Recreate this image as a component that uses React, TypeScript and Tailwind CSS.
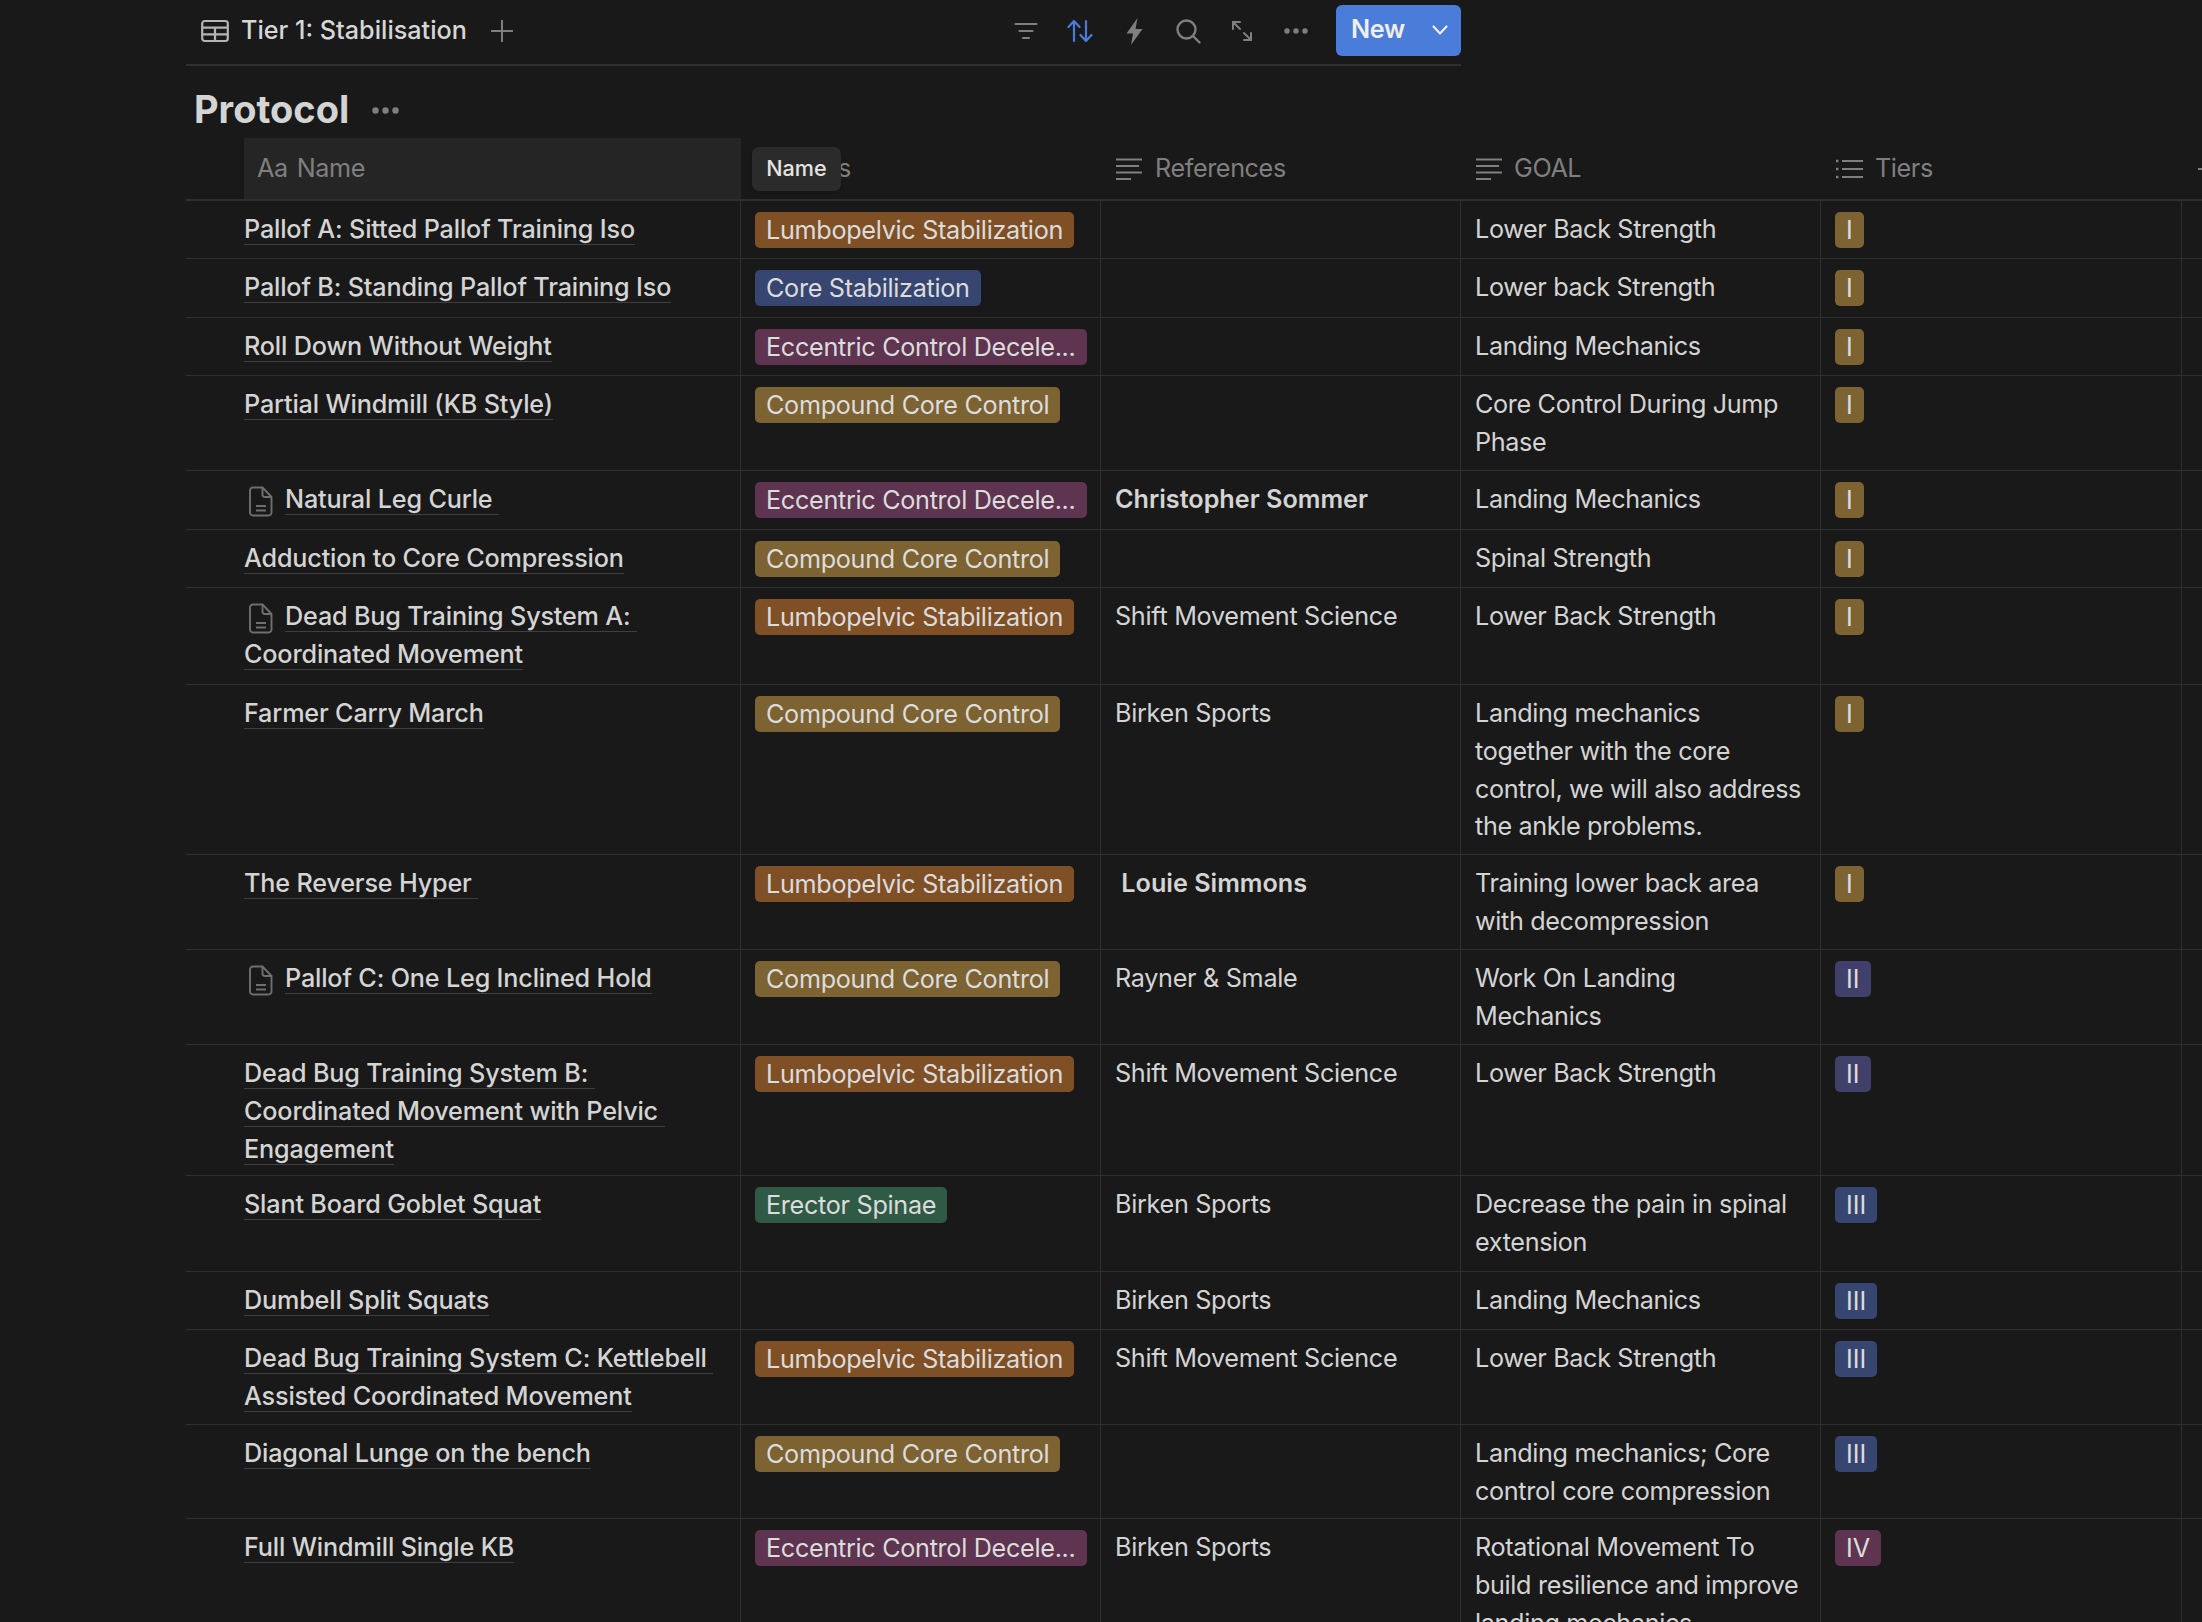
import React from "react";

type Row = {
  name: string;
  page?: boolean;
  tag?: string;
  source?: string;
  bold?: boolean;
  goal: string;
  tier: string;
  height: string;
};

const tagColors: Record<string, string> = {
  "Lumbopelvic Stabilization": "bg-[#7f5026]",
  "Core Stabilization": "bg-[#364670]",
  "Eccentric Control Decele...": "bg-[#5e3450]",
  "Compound Core Control": "bg-[#7d6232]",
  "Erector Spinae": "bg-[#2f5b46]",
};

const tierColors: Record<string, string> = {
  I: "bg-[#7d6232]",
  II: "bg-[#40406b]",
  III: "bg-[#364670]",
  IV: "bg-[#5e3450]",
};

const rows: Row[] = [
  { name: "Pallof A: Sitted Pallof Training Iso", tag: "Lumbopelvic Stabilization", goal: "Lower Back Strength", tier: "I", height: "h-[58px]" },
  { name: "Pallof B: Standing Pallof Training Iso", tag: "Core Stabilization", goal: "Lower back Strength", tier: "I", height: "h-[59px]" },
  { name: "Roll Down Without Weight", tag: "Eccentric Control Decele...", goal: "Landing Mechanics", tier: "I", height: "h-[58px]" },
  { name: "Partial Windmill (KB Style)", tag: "Compound Core Control", goal: "Core Control During Jump Phase", tier: "I", height: "h-[95px]" },
  { name: "Natural Leg Curle ", page: true, tag: "Eccentric Control Decele...", source: "Christopher Sommer", bold: true, goal: "Landing Mechanics", tier: "I", height: "h-[59px]" },
  { name: "Adduction to Core Compression", tag: "Compound Core Control", goal: "Spinal Strength", tier: "I", height: "h-[58px]" },
  { name: "Dead Bug Training System A: Coordinated Movement", page: true, tag: "Lumbopelvic Stabilization", source: "Shift Movement Science", goal: "Lower Back Strength", tier: "I", height: "h-[97px]" },
  { name: "Farmer Carry March", tag: "Compound Core Control", source: "Birken Sports", goal: "Landing mechanics together with the core control, we will also address the ankle problems.", tier: "I", height: "h-[170px]" },
  { name: "The Reverse Hyper ", tag: "Lumbopelvic Stabilization", source: " Louie Simmons", bold: true, goal: "Training lower back area with decompression", tier: "I", height: "h-[95px]" },
  { name: "Pallof C: One Leg Inclined Hold", page: true, tag: "Compound Core Control", source: "Rayner & Smale", goal: "Work On Landing Mechanics", tier: "II", height: "h-[95px]" },
  { name: "Dead Bug Training System B: Coordinated Movement with Pelvic Engagement", tag: "Lumbopelvic Stabilization", source: "Shift Movement Science", goal: "Lower Back Strength", tier: "II", height: "h-[131px]" },
  { name: "Slant Board Goblet Squat", tag: "Erector Spinae", source: "Birken Sports", goal: "Decrease the pain in spinal extension", tier: "III", height: "h-[96px]" },
  { name: "Dumbell Split Squats", source: "Birken Sports", goal: "Landing Mechanics", tier: "III", height: "h-[58px]" },
  { name: "Dead Bug Training System C: Kettlebell Assisted Coordinated Movement", tag: "Lumbopelvic Stabilization", source: "Shift Movement Science", goal: "Lower Back Strength", tier: "III", height: "h-[95px]" },
  { name: "Diagonal Lunge on the bench", tag: "Compound Core Control", goal: "Landing mechanics; Core control core compression", tier: "III", height: "h-[94px]" },
  { name: "Full Windmill Single KB", tag: "Eccentric Control Decele...", source: "Birken Sports", goal: "Rotational Movement To build resilience and improve landing mechanics", tier: "IV", height: "h-[130px]" },
];

const TableIcon = () => (
  <svg width="28" height="24" viewBox="0 0 28 24" fill="none" stroke="#b5b5b5" strokeWidth="2.2">
    <rect x="1.2" y="2" width="25.6" height="20" rx="2.5" />
    <path d="M1.2 8.6h25.6M1.2 15.3h25.6M14 8.6V22" />
  </svg>
);

const LinesIcon = () => (
  <svg width="26" height="24" viewBox="0 0 26 24" fill="none" stroke="#7f7f7f" strokeWidth="2">
    <path d="M0 2.5h26M0 9h23M0 15.5h26M0 22h15" />
  </svg>
);

const ListIcon = () => (
  <svg width="27" height="22" viewBox="0 0 27 22" fill="none" stroke="#7f7f7f" strokeWidth="2">
    <path d="M6 3h21M6 11h21M6 19h21" />
    <path d="M0 3h2.4M0 11h2.4M0 19h2.4" strokeWidth="2.4" />
  </svg>
);

const PageIcon = () => (
  <svg className="ml-[5px] mr-[12px] inline-block align-[-9px]" width="24" height="31" viewBox="0 0 24 31" fill="none" stroke="#6f6f6f" strokeWidth="1.9">
    <path d="M4 1.5h9.5l9 9.5v15.5a3 3 0 0 1-3 3H4a3 3 0 0 1-3-3v-22a3 3 0 0 1 3-3z" />
    <path d="M13.5 1.5v7a2.5 2.5 0 0 0 2.5 2.5h6.5M7 20h10M7 24.5h10" />
  </svg>
);

const Tag = ({ label }: { label: string }) => (
  <span className={`inline-block h-[36px] rounded-[5px] px-[11px] text-[25.2px] leading-[36px] tracking-[-0.3px] text-[#dcdcdc] ${tagColors[label]}`}>
    {label}
  </span>
);

const Toolbar = () => (
  <div className="ml-auto flex items-center">
    <div className="flex h-[40px] w-[54px] items-center justify-center">
      <svg width="24" height="20" viewBox="0 0 24 20" fill="none" stroke="#7f7f7f" strokeWidth="2.2" strokeLinecap="round">
        <path d="M1.5 3h21M5.5 10h13M9 17h6" />
      </svg>
    </div>
    <div className="flex h-[40px] w-[54px] items-center justify-center">
      <svg width="26" height="24" viewBox="0 0 26 24" fill="none" stroke="#4a7bd9" strokeWidth="2.2" strokeLinecap="round" strokeLinejoin="round">
        <path d="M7 22V2M1.5 8 7 2l5.5 6M19 2v20M13.5 16l5.5 6 5.5-6" />
      </svg>
    </div>
    <div className="flex h-[40px] w-[54px] items-center justify-center">
      <svg width="17" height="27" viewBox="0 0 17 27" fill="#7f7f7f">
        <path d="M11.5 0 0.5 15.5h6.5L5 27l11.5-16H9.5z" />
      </svg>
    </div>
    <div className="flex h-[40px] w-[54px] items-center justify-center">
      <svg width="25" height="25" viewBox="0 0 25 25" fill="none" stroke="#7f7f7f" strokeWidth="2.4" strokeLinecap="round">
        <circle cx="10.5" cy="10.5" r="9" />
        <path d="m17 17 6.5 6.5" />
      </svg>
    </div>
    <div className="flex h-[40px] w-[54px] items-center justify-center">
      <svg width="22" height="22" viewBox="0 0 22 22" fill="none" stroke="#7f7f7f" strokeWidth="2" strokeLinecap="round">
        <path d="M2 9V2h7M2 2l7 7M20 13v7h-7M20 20l-7-7" />
      </svg>
    </div>
    <div className="flex h-[40px] w-[54px] items-center justify-center">
      <svg width="24" height="6" viewBox="0 0 24 6" fill="#7f7f7f">
        <circle cx="3" cy="3" r="2.7" />
        <circle cx="12" cy="3" r="2.7" />
        <circle cx="21" cy="3" r="2.7" />
      </svg>
    </div>
    <button className="mb-[2px] ml-[13px] flex h-[51px] w-[125px] items-center rounded-[6px] bg-[#4a7cda] pl-[15px] text-[25.2px] font-semibold tracking-[-0.3px] text-[#f0eeea]">
      New
      <svg className="ml-[27px]" width="16" height="10" viewBox="0 0 16 10" fill="none" stroke="#f0eeea" strokeWidth="2.2" strokeLinecap="round" strokeLinejoin="round">
        <path d="m1.5 1.5 6.5 7 6.5-7" />
      </svg>
    </button>
  </div>
);

export default function App() {
  return (
    <div className="h-[1622px] overflow-hidden bg-[#191919] pl-[186px] font-[Inter,sans-serif] text-[25.2px] leading-[37.8px] text-[#d4d4d4]">
      <div className="flex h-[66px] w-[1275px] items-center border-b-2 border-[#2f2f2f] pb-[2px] pl-[15px]">
        <TableIcon />
        <span className="ml-[12px] font-medium text-[#d6d6d6]">Tier 1: Stabilisation</span>
        <svg className="ml-[24px]" width="22" height="22" viewBox="0 0 22 22" fill="none" stroke="#7f7f7f" strokeWidth="2">
          <path d="M11 0v22M0 11h22" />
        </svg>
        <Toolbar />
      </div>

      <div className="flex h-[72px] items-center pl-[8px] pt-[16px]">
        <h1 className="text-[38px] font-bold text-[#d4d4d4]">Protocol</h1>
        <svg className="ml-[23px] mt-[1px]" width="27" height="7" viewBox="0 0 27 7" fill="#7f7f7f">
          <circle cx="3.5" cy="3.5" r="3.2" />
          <circle cx="13.5" cy="3.5" r="3.2" />
          <circle cx="23.5" cy="3.5" r="3.2" />
        </svg>
      </div>

      <div className="relative grid h-[63px] grid-cols-[555px_360px_360px_360px_1fr] border-b-2 border-[#2f2f2f] tracking-[-0.4px] text-[#7f7f7f]">
        <div className="pl-[58px]">
          <div className="flex h-full items-center bg-[#252525] pl-[13px] pt-[1px]">
            <span className="mr-[9px] text-[#7f7f7f]">Aa</span>
            Name
          </div>
        </div>
        <div className="flex items-center pl-[97px] pt-[1px]">s</div>
        <div className="flex items-center gap-[13px] pl-[15px] pt-[1px]">
          <LinesIcon />
          References
        </div>
        <div className="flex items-center gap-[12px] pl-[15px] pt-[1px]">
          <LinesIcon />
          GOAL
        </div>
        <div className="flex items-center gap-[12px] pl-[15px] pt-[1px]">
          <ListIcon />
          Tiers
          <svg className="ml-auto mr-[-16px]" width="20" height="20" viewBox="0 0 20 20" fill="none" stroke="#7f7f7f" strokeWidth="2">
            <path d="M10 0v20M0 10h20" />
          </svg>
        </div>
        <div className="absolute left-[566px] top-[9px] flex h-[44px] w-[89px] items-center justify-center rounded-[7px] bg-[#2b2b2b] text-[21.6px] font-medium tracking-normal text-[#e3e3e3] shadow-md">
          Name
        </div>
      </div>

      {rows.map((row) => (
        <div
          key={row.name}
          className={`grid grid-cols-[555px_360px_360px_360px_361px_1fr] border-b border-[#2f2f2f] ${row.height}`}
        >
          <div className="whitespace-pre-wrap border-r border-[#2f2f2f] pl-[58px] pr-[14px] pt-[10px] font-medium tracking-[-0.17px]">
            {row.page && <PageIcon />}
            <span className="border-b border-[#3f3f3f]">{row.name}</span>
          </div>
          <div className="border-r border-[#2f2f2f] pl-[14px] pt-[11px]">
            {row.tag && <Tag label={row.tag} />}
          </div>
          <div className={`whitespace-pre-wrap border-r border-[#2f2f2f] pl-[14px] pt-[10px] ${row.bold ? "font-semibold" : "tracking-[-0.3px]"}`}>
            {row.source}
          </div>
          <div className="border-r border-[#2f2f2f] pl-[14px] pr-[17px] pt-[10px] tracking-[-0.35px]">{row.goal}</div>
          <div className="border-r border-[#2f2f2f] pl-[14px] pt-[11px]">
            <span className={`inline-block h-[36px] rounded-[5px] px-[11px] leading-[36px] text-[#dcdcdc] ${tierColors[row.tier]}`}>
              {row.tier}
            </span>
          </div>
          <div />
        </div>
      ))}
    </div>
  );
}
